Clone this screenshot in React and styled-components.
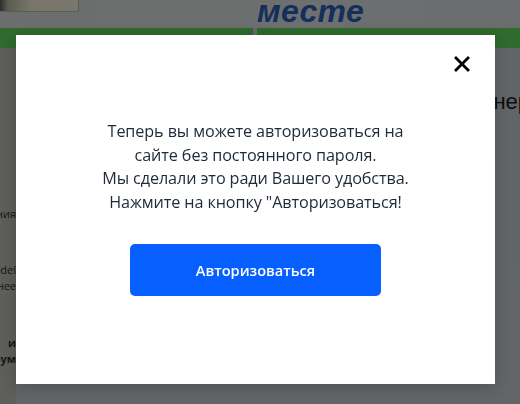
import React from "react";
import styled, { createGlobalStyle } from "styled-components";

const Global = createGlobalStyle`
  html, body { margin: 0; padding: 0; }
  body { width: 520px; height: 404px; overflow: hidden; font-family: "Open Sans", "Liberation Sans", sans-serif; }
  #root { width: 520px; height: 404px; }
`;

const Page = styled.div`
  width: 520px;
  height: 404px;
  display: flex;
  flex-direction: column;
  background: #c4cad2;
  overflow: hidden;
`;

const Header = styled.header`
  height: 28px;
  display: flex;
  align-items: flex-start;
  background: linear-gradient(90deg, #d8dcdc 0%, #dcdfe0 60%, #d4d8dc 100%);
`;

const HeaderPhoto = styled.div`
  width: 78px;
  height: 11px;
  background: linear-gradient(90deg, #5a5a58 0%, #b8b8a8 10%, #f0ecd0 40%, #f4f0d8 100%);
  border-bottom: 1px solid #b4b8b8;
  border-right: 1px solid #b4b8b8;
`;

const HeaderTitle = styled.div`
  margin-left: 178px;
  margin-top: -7px;
  font-family: "Liberation Sans", Arial, sans-serif;
  font-style: italic;
  font-weight: 700;
  font-size: 32px;
  letter-spacing: 0.3px;
  color: #2a5cb8;
`;

const Nav = styled.nav`
  height: 20px;
  display: flex;
  gap: 4px;
  background: #d0d4d8;
`;

const NavBar = styled.div`
  height: 20px;
  flex: ${(p) => p.$flex};
  background: #5ed45c;
`;

const Body = styled.div`
  flex: 1;
  display: flex;
`;

const Side = styled.aside`
  width: 16px;
  display: flex;
  flex-direction: column;
  align-items: flex-end;
  background: #bcbeb4;
  padding-top: 158px;
  font-family: "Open Sans", sans-serif;
  font-size: 11px;
  color: #303030;
`;

const SideLine = styled.div`
  white-space: nowrap;
  line-height: 16px;
  margin-top: ${(p) => p.$gap || 0}px;
  font-weight: ${(p) => (p.$bold ? 700 : 400)};
`;

const Main = styled.main`
  flex: 1;
  display: flex;
  justify-content: flex-end;
  align-items: flex-start;
  padding-top: 41px;
  overflow: hidden;
  background: linear-gradient(180deg, #c4cad0 0%, #c6cace 100%);
`;

const Heading = styled.h1`
  margin: 0 -10px 0 0;
  white-space: nowrap;
  font-family: "Liberation Sans", Arial, sans-serif;
  font-weight: 400;
  font-size: 22px;
  color: #1a1a1a;
`;

const Overlay = styled.div`
  position: fixed;
  inset: 0;
  background: rgba(0, 0, 0, 0.5);
  display: flex;
  align-items: flex-start;
  justify-content: flex-start;
  padding: 35px 0 0 16px;
`;

const Modal = styled.div`
  position: relative;
  width: 479px;
  height: 349px;
  background: #ffffff;
  box-shadow: 0 4px 16px rgba(0, 0, 0, 0.2);
  display: flex;
  flex-direction: column;
  align-items: center;
  padding-top: 85px;
  box-sizing: border-box;
`;

const Close = styled.button`
  position: absolute;
  top: 19px;
  right: 23px;
  width: 20px;
  height: 20px;
  padding: 0;
  border: 0;
  background: none;
  display: flex;
  align-items: center;
  justify-content: center;
  cursor: pointer;
`;

const Message = styled.p`
  margin: 0;
  text-align: center;
  font-family: "Open Sans", sans-serif;
  font-size: 16.2px;
  line-height: 23.5px;
  color: #1e2a3a;
  letter-spacing: -0.1px;
`;

const Button = styled.button`
  margin-top: 30px;
  width: 251px;
  height: 52px;
  border: 0;
  border-radius: 5px;
  background: #075fff;
  color: #ffffff;
  font-family: "Open Sans", sans-serif;
  font-weight: 600;
  font-size: 14.6px;
  cursor: pointer;
`;

export default function App() {
  return (
    <>
      <Global />
      <Page>
        <Header>
          <HeaderPhoto />
          <HeaderTitle>месте</HeaderTitle>
        </Header>
        <Nav>
          <NavBar $flex="253" />
          <NavBar $flex="263" />
        </Nav>
        <Body>
          <Side>
            <SideLine>Основания</SideLine>
            <SideLine $gap={40}>Model</SideLine>
            <SideLine>Подробнее</SideLine>
            <SideLine $gap={41} $bold>и</SideLine>
            <SideLine $bold>Форум</SideLine>
          </Side>
          <Main>
            <Heading>Партнер</Heading>
          </Main>
        </Body>
      </Page>
      <Overlay>
        <Modal>
          <Close aria-label="Закрыть">
            <svg width="16" height="16" viewBox="0 0 16 16">
              <path d="M2 2 L14 14 M14 2 L2 14" stroke="#000" strokeWidth="2.8" strokeLinecap="square" />
            </svg>
          </Close>
          <Message>
            Теперь вы можете авторизоваться на
            <br />
            сайте без постоянного пароля.
            <br />
            Мы сделали это ради Вашего удобства.
            <br />
            Нажмите на кнопку "Авторизоваться!
          </Message>
          <Button>Авторизоваться</Button>
        </Modal>
      </Overlay>
    </>
  );
}
